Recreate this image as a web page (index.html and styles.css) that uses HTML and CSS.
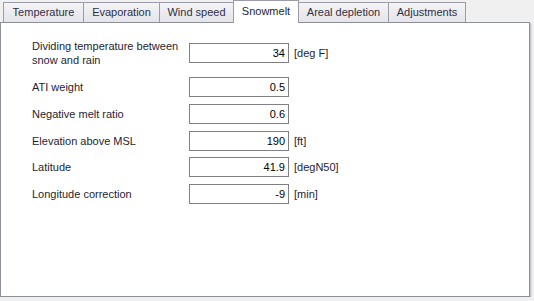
FILE: index.html
```html
<!DOCTYPE html>
<html lang="en">
<head>
    <meta charset="UTF-8">
    <title>Snowmelt</title>
    <link rel="stylesheet" href="styles.css">
</head>
<body>
<div class="tabs">
    <div class="tab">Temperature</div>
    <div class="tab">Evaporation</div>
    <div class="tab">Wind speed</div>
    <div class="tab active">Snowmelt</div>
    <div class="tab">Areal depletion</div>
    <div class="tab">Adjustments</div>
</div>
<div class="panel">
    <div class="rows">
        <div class="row tall">
            <label>Dividing temperature between<br>snow and rain</label>
            <div class="field">34</div>
            <span class="unit">[deg F]</span>
        </div>
        <div class="row">
            <label>ATI weight</label>
            <div class="field">0.5</div>
            <span class="unit"></span>
        </div>
        <div class="row">
            <label>Negative melt ratio</label>
            <div class="field">0.6</div>
            <span class="unit"></span>
        </div>
        <div class="row">
            <label>Elevation above MSL</label>
            <div class="field">190</div>
            <span class="unit">[ft]</span>
        </div>
        <div class="row">
            <label>Latitude</label>
            <div class="field">41.9</div>
            <span class="unit">[degN50]</span>
        </div>
        <div class="row">
            <label>Longitude correction</label>
            <div class="field">-9</div>
            <span class="unit">[min]</span>
        </div>
    </div>
</div>
</body>
</html>
```

FILE: styles.css
```css
body {
    margin: 0;
    background: #f0f0f0;
    font-family: "Liberation Sans", Arial, sans-serif;
    font-size: 11px;
    color: #1e1e32;
}
.tabs {
    display: flex;
    align-items: flex-end;
    padding-left: 3px;
    height: 22px;
}
.tab {
    box-sizing: border-box;
    height: 20px;
    line-height: 19px;
    margin-right: -1px;
    border: 1px solid #9c9ca8;
    border-bottom: none;
    background: linear-gradient(#f4f4f6, #e4e4ea);
    color: #2e2e44;
    text-align: center;
    white-space: nowrap;
}
.tab:nth-child(1) { width: 81px; }
.tab:nth-child(2) { width: 77px; }
.tab:nth-child(3) { width: 75px; }
.tab:nth-child(4) { width: 66px; }
.tab:nth-child(5) { width: 91px; }
.tab:nth-child(6) { width: 78px; }
.tab.active {
    height: 23px;
    line-height: 21px;
    margin-bottom: -1px;
    background: #fff;
    color: #1e1e32;
    position: relative;
    z-index: 1;
}
.panel {
    width: 528px;
    height: 257px;
    background: #fff;
    border: 1px solid #8c8e98;
    box-shadow: 1px 1px 0 #c4c4ca, 2px 2px 0 #dedee2;
    padding-top: 16px;
}
.rows {
    display: flex;
    flex-direction: column;
    gap: 6.7px;
    padding-left: 31px;
}
.row {
    display: grid;
    grid-template-columns: 157px 100px auto;
    align-items: center;
    height: 20px;
}
.row.tall {
    height: 28px;
    margin-bottom: 3.5px;
}
.row label {
    line-height: 14px;
}
.field {
    height: 18px;
    line-height: 18px;
    border: 1px solid #7f7f84;
    text-align: right;
    padding-right: 3px;
    color: #000;
}
.unit {
    padding-left: 5px;
}
```
